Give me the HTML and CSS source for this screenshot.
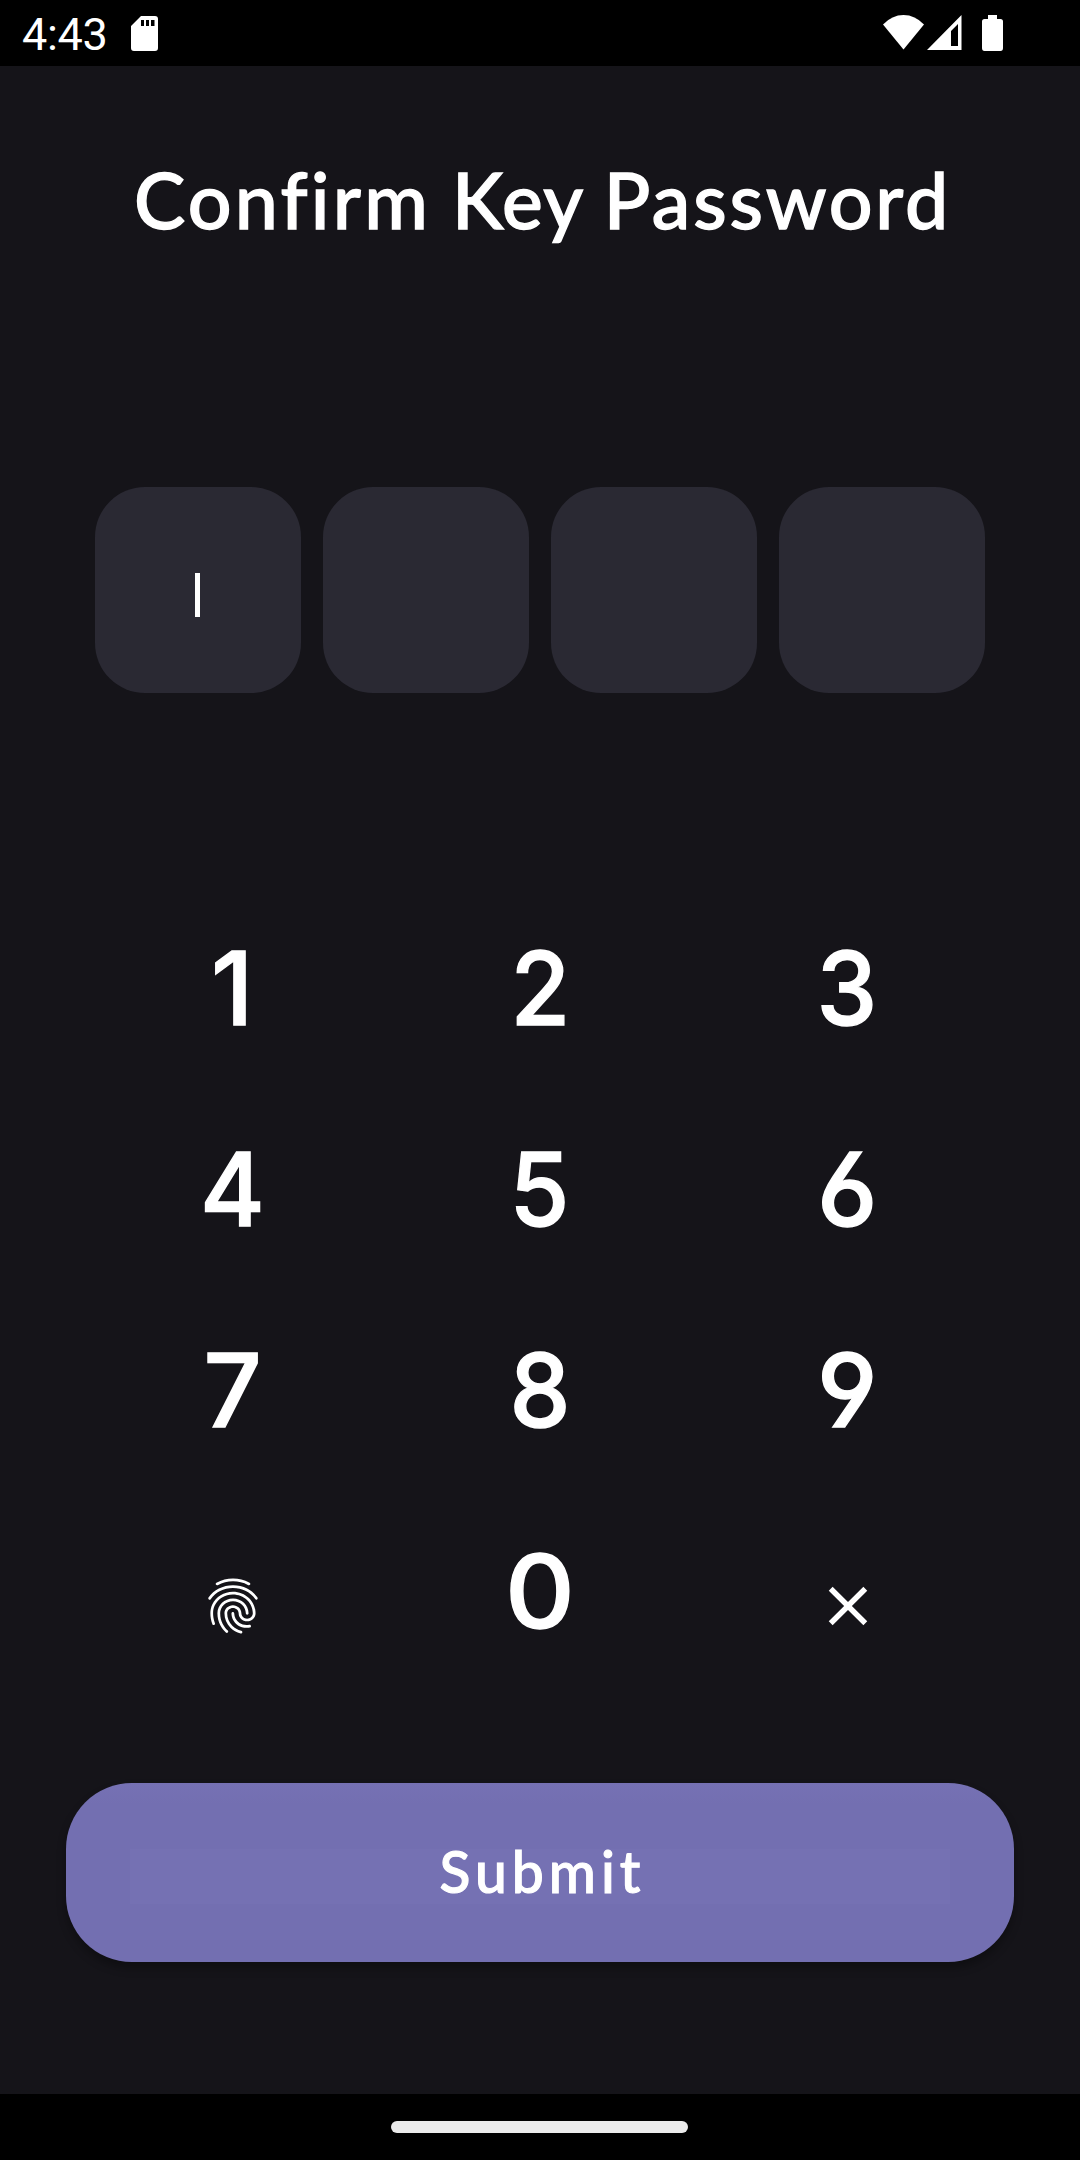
FILE: index.html
```html
<!DOCTYPE html>
<html lang="en">
<head>
<meta charset="utf-8">
<title>Confirm Key Password</title>
<link rel="stylesheet" href="styles.css">
</head>
<body>
<div class="screen">
  <header class="status">
    <span class="time">4:43</span>
    <svg class="sd" width="27" height="35" viewBox="0 0 27 35"><path fill="#fff" fill-rule="evenodd" d="M10 0H24Q27 0 27 3V32Q27 35 24 35H3Q0 35 0 32V10ZM10 4V10H13V4ZM15 4V10H18V4ZM20 4V10H23.500V4Z"/></svg>
    <svg class="wifi" width="41" height="35" viewBox="0 0 41 35"><path fill="#fff" d="M0 9.500Q9 0 20.500 0T41 9.500L20.500 34.500Z"/></svg>
    <svg class="signal" width="35" height="35" viewBox="0 0 35 35"><path fill="#fff" fill-rule="evenodd" d="M34.500 0V35H0ZM31 9L24 16V31H31Z"/></svg>
    <svg class="battery" width="21" height="36" viewBox="0 0 21 36"><path fill="#fff" d="M6 0H15V4H18.500Q21 4 21 6.500V33Q21 36 18.500 36H2.500Q0 36 0 33V6.500Q0 4 2.500 4H6Z"/></svg>
  </header>
  <main class="content">
    <h1 class="title"><span class="wide">Confirm</span> Key <span class="wide last">Password</span></h1>
    <div class="pin">
      <div class="pin-box"><span class="caret"></span></div>
      <div class="pin-box"></div>
      <div class="pin-box"></div>
      <div class="pin-box"></div>
    </div>
    <div class="keypad">
      <button class="key"><span class="digit d1">1</span></button>
      <button class="key"><span class="digit d2">2</span></button>
      <button class="key"><span class="digit d3">3</span></button>
      <button class="key"><span class="digit d4">4</span></button>
      <button class="key"><span class="digit d5">5</span></button>
      <button class="key"><span class="digit d6">6</span></button>
      <button class="key"><span class="digit d7">7</span></button>
      <button class="key"><span class="digit d8">8</span></button>
      <button class="key"><span class="digit d9">9</span></button>
      <button class="key icon-key" aria-label="Fingerprint"><svg width="66" height="66" viewBox="0 0 24 24" fill="#fff"><path d="M17.81 4.47c-.08 0-.16-.02-.23-.06C15.66 3.42 14 3 12.010 3c-1.980 0-3.860.47-5.570 1.410-.24.13-.54.04-.68-.2-.13-.24-.04-.55.2-.68C7.820 2.520 9.860 2 12.010 2c2.130 0 3.990.47 6.030 1.520.25.13.34.43.21.67-.09.18-.26.28-.44.28zM3.500 9.720c-.1 0-.2-.03-.29-.09-.23-.16-.28-.47-.12-.7.99-1.400 2.250-2.500 3.750-3.270C9.980 4.040 14 4.030 17.150 5.650c1.500.77 2.760 1.860 3.750 3.250.16.22.11.54-.12.7-.23.16-.54.11-.7-.12-.9-1.260-2.040-2.250-3.390-2.940-2.870-1.470-6.540-1.470-9.400.01-1.360.7-2.500 1.700-3.400 2.960-.08.14-.23.21-.39.21zm6.250 12.070c-.13 0-.26-.05-.35-.15-.87-.87-1.340-1.430-2.010-2.640-.69-1.230-1.050-2.730-1.050-4.340 0-2.970 2.540-5.390 5.660-5.390s5.660 2.420 5.660 5.390c0 .28-.22.5-.5.5s-.5-.22-.5-.5c0-2.420-2.090-4.390-4.660-4.390-2.570 0-4.660 1.970-4.660 4.390 0 1.440.32 2.770.93 3.850.64 1.150 1.080 1.640 1.850 2.420.19.2.19.51 0 .71-.11.1-.24.15-.37.15zm7.170-1.850c-1.190 0-2.240-.3-3.100-.89-1.490-1.010-2.380-2.650-2.380-4.390 0-.28.22-.5.5-.5s.5.22.5.5c0 1.410.72 2.740 1.940 3.560.71.48 1.540.71 2.540.71.24 0 .64-.03 1.040-.1.27-.05.53.13.58.41.05.27-.13.53-.41.58-.57.11-1.070.12-1.210.12zM14.910 22c-.04 0-.09-.01-.13-.02-1.590-.44-2.630-1.030-3.720-2.100-1.400-1.390-2.170-3.240-2.170-5.220 0-1.620 1.380-2.940 3.080-2.940 1.700 0 3.080 1.320 3.080 2.940 0 1.070.93 1.940 2.080 1.940s2.080-.87 2.080-1.940c0-3.770-3.250-6.830-7.250-6.830-2.840 0-5.440 1.580-6.610 4.030-.39.81-.59 1.760-.59 2.800 0 .78.07 2.010.67 3.610.1.26-.03.55-.29.64-.26.1-.55-.04-.64-.29-.49-1.310-.73-2.610-.73-3.960 0-1.200.23-2.290.68-3.240 1.330-2.790 4.280-4.600 7.510-4.600 4.550 0 8.250 3.510 8.250 7.830 0 1.620-1.380 2.940-3.080 2.940s-3.080-1.320-3.080-2.940c0-1.070-.93-1.940-2.080-1.940s-2.080.87-2.080 1.940c0 1.710.66 3.310 1.870 4.510.95.94 1.860 1.460 3.270 1.850.27.07.42.35.35.61-.05.23-.26.38-.47.38z"/></svg></button>
      <button class="key"><span class="digit d0">0</span></button>
      <button class="key icon-key clear" aria-label="Clear"><svg width="66" height="66" viewBox="0 0 24 24" fill="#fff"><path d="M19 6.410 17.590 5 12 10.590 6.410 5 5 6.410 10.590 12 5 17.590 6.410 19 12 13.410 17.590 19 19 17.590 13.410 12z"/></svg></button>
    </div>
    <button class="submit"><span class="submit-label">Submit</span></button>
  </main>
  <footer class="navbar"><div class="pill"></div></footer>
</div>
</body>
</html>
```
FILE: styles.css
```css
* { box-sizing: border-box; }
body { margin: 0; background: #151419; }
button { border: 0; padding: 0; background: none; color: inherit; font: inherit; }
svg { display: block; flex: none; }

.screen {
  width: 1080px;
  height: 2160px;
  display: flex;
  flex-direction: column;
  background: #151419;
  color: #fff;
  overflow: hidden;
}

.status {
  height: 66px;
  flex: none;
  display: flex;
  align-items: flex-start;
  padding: 15px 77px 0 22px;
  background: #000;
}
.time {
  width: 109px;
  font: 400 45px/40px Roboto, sans-serif;
  letter-spacing: -0.3px;
}
.sd { margin-top: 1px; }
.wifi { margin-left: auto; }
.signal { margin-left: 3px; }
.battery { margin-left: 20px; }

.content {
  flex: 1;
  display: flex;
  flex-direction: column;
  align-items: center;
}
.title {
  margin: 83px 0 0;
  padding-left: 5px;
  height: 102px;
  font: 500 77px/100px Lato, sans-serif;
  letter-spacing: 1.500px;
  white-space: nowrap;
  -webkit-text-stroke: 1.300px #fff;
}
.wide { letter-spacing: 3.200px; }
.wide.last { letter-spacing: 2.800px; }

.pin {
  display: flex;
  gap: 22px;
  margin-top: 236px;
}
.pin-box {
  width: 206px;
  height: 206px;
  border-radius: 50px;
  background: #2a2933;
  display: flex;
  align-items: center;
  justify-content: center;
}
.caret {
  width: 5px;
  height: 44px;
  margin: 10px 1px 0 0;
  background: #fff;
}

.keypad {
  width: 922px;
  margin-top: 195px;
  display: grid;
  grid-template-columns: repeat(3, 1fr);
  grid-auto-rows: 201px;
}
.key {
  display: flex;
  align-items: center;
  justify-content: center;
}
.digit {
  font: 500 102px/201px Inter, sans-serif;
  font-feature-settings: "cv03", "cv04";
  -webkit-text-stroke: 1.300px #fff;
}
.d2, .d3, .d5, .d8 { transform: scaleX(0.95); }
.d4 { transform: scaleX(0.97); }
.d0 { transform: scaleX(1.06); }
.d1, .d4 { margin-right: 1px; }
.icon-key { padding-top: 28px; }
.clear { padding-left: 2px; }

.submit {
  width: 948px;
  height: 179px;
  margin-top: 91px;
  border-radius: 66px;
  background: linear-gradient(#7671b4, #736fb1 12%);
  box-shadow: 0 6px 10px rgba(0, 0, 0, 0.3);
  display: flex;
  align-items: center;
  justify-content: center;
}
.submit-label {
  width: 820px;
  height: 55px;
  margin-top: 8px;
  padding-left: 5px;
  background: #7571b3;
  font: 500 57px/45px Lato, sans-serif;
  letter-spacing: 5px;
  text-align: center;
  -webkit-text-stroke: 1.100px #fff;
}

.navbar {
  height: 66px;
  flex: none;
  display: flex;
  align-items: center;
  justify-content: center;
  background: #000;
}
.pill {
  width: 297px;
  height: 12px;
  margin-right: 1px;
  border-radius: 6px;
  background: #ebebeb;
}
```
